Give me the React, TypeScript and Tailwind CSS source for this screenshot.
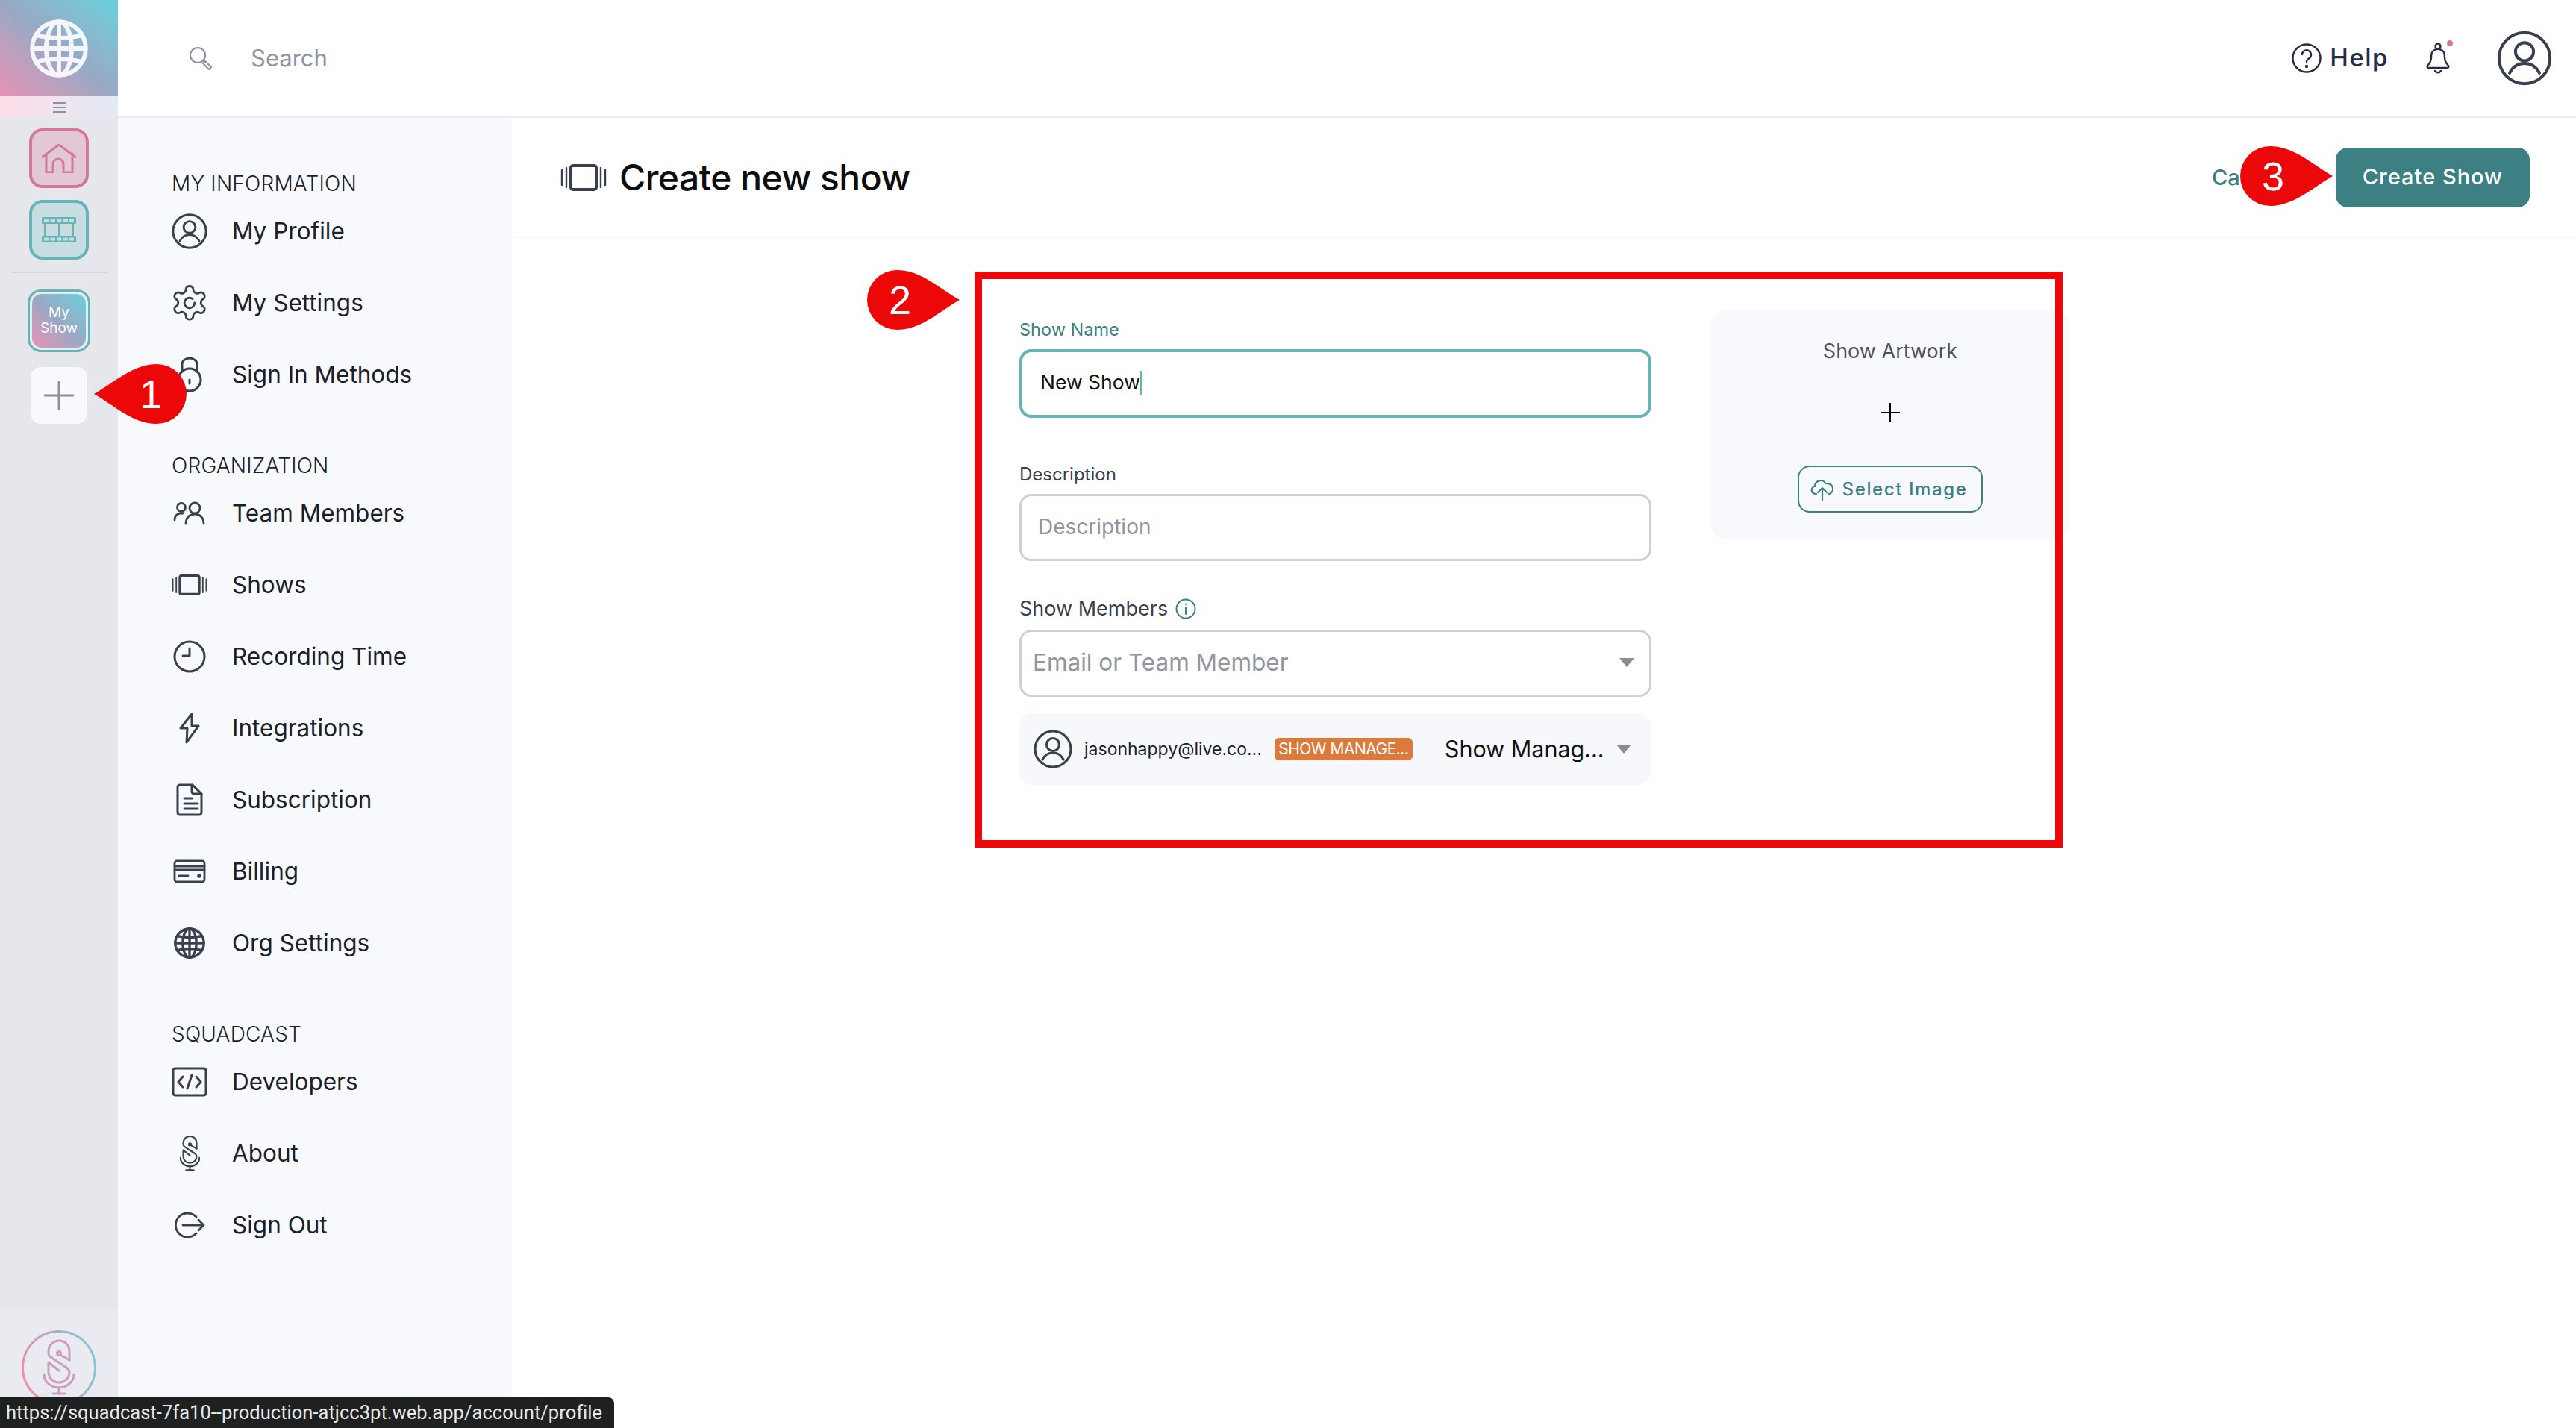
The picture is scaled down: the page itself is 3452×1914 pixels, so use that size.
import type { ReactNode } from "react";

const ink = "#3a3f4e";

const Ico = ({ children, w = 48, h = 48, vb = "0 0 48 48", color = ink, sw = 3 }: { children: ReactNode; w?: number; h?: number; vb?: string; color?: string; sw?: number }) => (
  <svg className="shrink-0" width={w} height={h} viewBox={vb} fill="none" stroke={color} strokeWidth={sw} strokeLinecap="round" strokeLinejoin="round">
    {children}
  </svg>
);

const UserIcon = ({ size = 52, sw = 3.2 }: { size?: number; sw?: number }) => (
  <Ico w={size} h={size} vb="0 0 52 52" sw={sw}>
    <circle cx="26" cy="26" r="24" />
    <circle cx="26" cy="20" r="8.5" />
    <path d="M12 40c3-6 8-9 14-9s11 3 14 9" />
  </Ico>
);

const ShowsIcon = ({ w = 48, h = 28 }: { w?: number; h?: number }) => (
  <Ico w={w} h={h} vb="0 0 62 36" sw={3}>
    <rect x="14" y="2" width="34" height="32" rx="3" strokeWidth="4" />
    <path d="M8 5v26M2 8v20M54 5v26M60 8v20" strokeWidth="2.4" />
  </Ico>
);

const GlobeLines = () => (
  <>
    <circle cx="24" cy="24" r="21" />
    <ellipse cx="24" cy="24" rx="10" ry="21" />
    <path d="M24 3v42M3 24h42M6 13.5c10 3 26 3 36 0M6 34.5c10-3 26-3 36 0" />
  </>
);

// S shaped microphone used for the SquadCast mark
const MicPaths = () => (
  <>
    <path d="M35 26V14A14 14 0 0 0 7 14V17Q7 20 10 22L31 36Q35 39 35 42A14 14 0 0 1 7 42V29L21 40" />
    <circle cx="21" cy="17" r="2.5" />
    <path d="M23 19L35 26" />
    <path d="M1 45A20 18 0 0 0 41 45" />
    <path d="M21 63v6M13 71h16" />
  </>
);

const items: Record<string, { label: string; icon: ReactNode }[]> = {
  "MY INFORMATION": [
    { label: "My Profile", icon: <UserIcon size={48} /> },
    {
      label: "My Settings",
      icon: (
        <Ico w={54} h={54} vb="0 0 24 24" sw={1.25}>
          <path d="M12.2 2h-.4a2 2 0 0 0-2 2v.2a2 2 0 0 1-1 1.7l-.4.2a2 2 0 0 1-2 0l-.2-.1a2 2 0 0 0-2.7.7l-.2.4a2 2 0 0 0 .7 2.7l.2.1a2 2 0 0 1 1 1.7v.6a2 2 0 0 1-1 1.7l-.2.1a2 2 0 0 0-.7 2.7l.2.4a2 2 0 0 0 2.7.7l.2-.1a2 2 0 0 1 2 0l.4.2a2 2 0 0 1 1 1.7v.2a2 2 0 0 0 2 2h.4a2 2 0 0 0 2-2v-.2a2 2 0 0 1 1-1.7l.4-.2a2 2 0 0 1 2 0l.2.1a2 2 0 0 0 2.7-.7l.2-.4a2 2 0 0 0-.7-2.7l-.2-.1a2 2 0 0 1-1-1.7v-.6a2 2 0 0 1 1-1.7l.2-.1a2 2 0 0 0 .7-2.7l-.2-.4a2 2 0 0 0-2.7-.7l-.2.1a2 2 0 0 1-2 0l-.4-.2a2 2 0 0 1-1-1.7V4a2 2 0 0 0-2-2z" />
          <path d="M15 12a3 3 0 1 1-1.2-2.4" />
        </Ico>
      ),
    },
    {
      label: "Sign In Methods",
      icon: (
        <Ico w={40} h={48} vb="0 0 40 48" sw={3}>
          <circle cx="20" cy="31" r="15" />
          <path d="M10 20V10a10 8 0 0 1 20 0v10" />
          <path d="M20 31v5" />
        </Ico>
      ),
    },
  ],
  ORGANIZATION: [
    {
      label: "Team Members",
      icon: (
        <Ico w={44} h={32} vb="0 0 44 32" sw={2.8}>
          <circle cx="11" cy="8" r="5.5" />
          <circle cx="29" cy="9" r="7" />
          <path d="M2 25c0-6 4-9 8-9h3M17 30c0-8 5-13 12-13s12 5 12 13" />
        </Ico>
      ),
    },
    { label: "Shows", icon: <ShowsIcon /> },
    {
      label: "Recording Time",
      icon: (
        <Ico w={44} h={44} vb="0 0 44 44" sw={3}>
          <circle cx="22" cy="22" r="20" />
          <path d="M22 11v10h-9" />
        </Ico>
      ),
    },
    {
      label: "Integrations",
      icon: (
        <Ico w={30} h={42} vb="0 0 30 42" sw={3}>
          <path d="M18 2L3 21h9l-1 19 16-22h-9l0-16z" />
        </Ico>
      ),
    },
    {
      label: "Subscription",
      icon: (
        <Ico w={36} h={44} vb="0 0 36 44" sw={3}>
          <path d="M5 2h17l12 12v25a3 3 0 0 1-3 3H5a3 3 0 0 1-3-3V5a3 3 0 0 1 3-3z" />
          <path d="M21 2v9a3 3 0 0 0 3 3h10M11 20h10M11 27h18M11 34h18" />
        </Ico>
      ),
    },
    {
      label: "Billing",
      icon: (
        <Ico w={44} h={32} vb="0 0 44 32" sw={2.8}>
          <rect x="2" y="2" width="40" height="28" rx="3" />
          <path d="M2 9h40M2 14h40M8 22h12" />
          <circle cx="35" cy="22" r="1.4" fill={ink} />
        </Ico>
      ),
    },
    {
      label: "Org Settings",
      icon: (
        <Ico w={44} h={44} vb="0 0 48 48" sw={3.6}>
          <GlobeLines />
        </Ico>
      ),
    },
  ],
  SQUADCAST: [
    {
      label: "Developers",
      icon: (
        <Ico w={48} h={40} vb="0 0 48 40" sw={3}>
          <rect x="2" y="2" width="44" height="36" rx="3" />
          <path d="M15 13l-6 7 6 7M33 13l6 7-6 7M27 11l-6 18" />
        </Ico>
      ),
    },
    {
      label: "About",
      icon: (
        <Ico w={27} h={46} vb="0 0 42 72" sw={3.4}>
          <MicPaths />
        </Ico>
      ),
    },
    {
      label: "Sign Out",
      icon: (
        <Ico w={44} h={36} vb="0 0 44 36" sw={2.8}>
          <path d="M31 7A16 16 0 1 0 31 29" />
          <path d="M13 18h28M34 11l7 7-7 7" />
        </Ico>
      ),
    },
  ],
};

const Teardrop = ({ n, flip, className }: { n: string; flip?: boolean; className: string }) => (
  <div className={`absolute h-[80px] w-[124px] ${className}`}>
    <svg width="124" height="80" viewBox="0 0 124 80" className={flip ? "-scale-x-100" : ""}>
      <path d="M0 40C28 24 52 0 84 0a40 40 0 0 1 0 80C52 80 28 56 0 40z" fill="#ec0808" />
    </svg>
    <span className={`absolute top-0 flex h-[80px] w-[60px] items-center justify-center font-['Liberation_Sans',sans-serif] text-[54px] text-white ${flip ? "left-[14px]" : "right-[18px]"}`}>
      {n}
    </span>
  </div>
);

const Caret = () => <div className="h-0 w-0 border-x-[10px] border-t-[12px] border-x-transparent border-t-[#8d8d8d]" />;

export default function App() {
  return (
    <div className="relative flex h-[1914px] w-[3452px] overflow-hidden bg-white font-['Inter',sans-serif] text-[#1c1f2a]">
      {/* icon rail */}
      <div className="flex w-[158px] shrink-0 flex-col items-center bg-[#e6e7ec]">
        <div className="flex h-[129px] w-full items-center justify-center bg-gradient-to-tr from-[#e78fb5] via-[#97a9c4] to-[#64d0de]">
          <svg width="82" height="82" viewBox="0 0 48 48" fill="none" stroke="#f4f6fb" strokeWidth="3.4">
            <GlobeLines />
          </svg>
        </div>
        <div className="flex h-[29px] w-full flex-col items-center justify-center gap-[4px] bg-gradient-to-r from-[#fbdfe9] to-[#e4e9f3]">
          <div className="h-[2px] w-[17px] bg-[#8d93a0]" />
          <div className="h-[2px] w-[17px] bg-[#8d93a0]" />
          <div className="h-[2px] w-[17px] bg-[#8d93a0]" />
        </div>
        <div className="mt-[14px] flex h-[80px] w-[80px] items-center justify-center rounded-[18px] border-4 border-[#d4779a] bg-[#e2c8d6]">
          <svg width="46" height="39" viewBox="0 0 46 39" fill="none" stroke="#d4779a" strokeWidth="3" strokeLinecap="round" strokeLinejoin="round">
            <path d="M1 17.500L23 1l22 16.500M6 13v25h9V27a7 7 0 0 1 14 0v11h12V13" />
          </svg>
        </div>
        <div className="mt-[16px] flex h-[80px] w-[80px] items-center justify-center rounded-[18px] border-4 border-[#65b4b6] bg-[#c8dde1]">
          <svg width="46" height="34" viewBox="0 0 46 34" fill="none">
            <rect x="0" y="0" width="46" height="9" rx="1.500" fill="#65b4b6" />
            <rect x="0" y="25" width="46" height="9" rx="1.500" fill="#65b4b6" />
            <path d="M4 9v16M23 9v16M42 9v16" stroke="#65b4b6" strokeWidth="2" />
            <path d="M3 4.500h40M3 29.500h40" stroke="#c8dde1" strokeWidth="4" strokeDasharray="6.400 2.100" />
          </svg>
        </div>
        <div className="mt-[16px] h-[2px] w-[128px] bg-[#d6d8df]" />
        <div className="mt-[22px] flex h-[84px] w-[84px] items-center justify-center rounded-[18px] border-[3px] border-[#65b4b6] bg-[#e8ebf0]">
          <div className="flex h-[72px] w-[72px] items-center justify-center rounded-[13px] bg-gradient-to-tr from-[#e78fb5] via-[#97a9c4] to-[#64d0de] pb-[2px] text-center text-[19px] leading-[21px] text-white">
            My
            <br />
            Show
          </div>
        </div>
        <div className="mt-[20px] flex h-[76px] w-[76px] items-center justify-center rounded-[14px] bg-[#f8f9fd]">
          <svg width="40" height="40" viewBox="0 0 40 40" stroke="#8d909a" strokeWidth="3" strokeLinecap="round">
            <path d="M20 1v38M1 20h38" />
          </svg>
        </div>
        <div className="mt-auto flex h-[160px] w-full justify-center bg-[#eaebf0] pt-[29px]">
          <svg width="100" height="100" viewBox="0 0 100 100" fill="none" className="shrink-0">
            <defs>
              <linearGradient id="ring" x1="0" y1="0.650" x2="1" y2="0.350">
                <stop offset="0" stopColor="#f48aae" />
                <stop offset="0.500" stopColor="#b3a6c6" />
                <stop offset="1" stopColor="#84c8d8" />
              </linearGradient>
            </defs>
            <circle cx="50" cy="50" r="48.500" stroke="url(#ring)" strokeWidth="3" />
            <g transform="translate(29 14)" stroke="#cc9dbe" strokeWidth="3" strokeLinecap="round" strokeLinejoin="round">
              <MicPaths />
            </g>
          </svg>
        </div>
      </div>

      <div className="flex min-w-0 flex-1 flex-col">
        {/* top bar */}
        <header className="flex h-[158px] shrink-0 items-center border-b-2 border-[#ececf0] pr-[32px] pl-[95px]">
          <svg width="32" height="32" viewBox="0 0 32 32" fill="none" stroke="#8d93a0" strokeWidth="2.200">
            <circle cx="12" cy="12" r="10" />
            <path d="M19 19l3 3M22 20l8 8-3 3-8-8z" />
          </svg>
          <span className="ml-[51px] text-[31px] text-[#8d93a0]">Search</span>
          <div className="ml-auto flex items-center">
            <svg width="40" height="40" viewBox="0 0 40 40" fill="none" stroke="#262c44" strokeWidth="2.400" strokeLinecap="round">
              <circle cx="20" cy="20" r="18.500" />
              <path d="M14 15a6 6 0 1 1 9 5.500c-2 1.200-3 2.300-3 4.500" />
              <circle cx="20" cy="31" r="1" fill="#262c44" />
            </svg>
            <span className="ml-[11px] text-[33px] font-medium tracking-[1.5px] text-[#262c44]">Help</span>
            <div className="relative ml-[50px] h-[42px] w-[32px]">
              <svg width="32" height="42" viewBox="0 0 32 42" fill="none" stroke="#262c44" strokeWidth="2.400" strokeLinecap="round" strokeLinejoin="round">
                <circle cx="16" cy="5" r="3.500" />
                <path d="M10 11c-3 2-3 6-3 9 0 5-2 8-5 11-1 1 0 3 1 3h26c1 0 2-2 1-3-3-3-5-6-5-11 0-3 0-7-3-9a9 9 0 0 0-12 0z" />
                <path d="M12 38c2 3 6 3 8 0" />
              </svg>
              <div className="absolute top-[-3px] right-[-4px] h-[8px] w-[8px] rounded-full bg-[#d4779a]" />
            </div>
            <div className="ml-[63px]">
              <UserIcon size={74} sw={2.800} />
            </div>
          </div>
        </header>

        <div className="flex min-h-0 flex-1">
          {/* settings nav */}
          <nav className="flex w-[528px] shrink-0 flex-col bg-[#f8f9fd] pt-[72px] pl-[72px]">
            {Object.entries(items).map(([title, rows], i) => (
              <div key={title} className={i > 0 ? "mt-[58px]" : ""}>
                <div className="flex h-[32px] items-center text-[28px] font-light tracking-[0.2px]">{title}</div>
                {rows.map((row) => (
                  <div key={row.label} className="flex h-[96px] items-center">
                    <div className="flex w-[48px] justify-center">{row.icon}</div>
                    <span className="ml-[33px] text-[31.500px]">{row.label}</span>
                  </div>
                ))}
              </div>
            ))}
          </nav>

          <main className="min-w-0 flex-1">
            <div className="flex h-[161px] items-center border-b-2 border-[#f6f7fb] pr-[62px] pl-[65px]">
              <ShowsIcon w={62} h={36} />
              <h1 className="ml-[17px] text-[48px] font-medium tracking-[-0.5px] text-[#0d0d10]">Create new show</h1>
              <span className="ml-auto w-[166px] text-[29px] font-medium text-[#3c8083]">Cancel</span>
              <button className="h-[80px] w-[260px] rounded-[16px] bg-[#3c8083] pb-[2px] text-[29px] font-medium tracking-[1px] text-white">Create Show</button>
            </div>

            <div className="ml-[680px] flex items-start pt-[105px]">
              {/* form */}
              <div className="flex w-[847px] shrink-0 flex-col">
                <label className="mt-[2px] flex h-[32px] items-center text-[23.500px] text-[#3c8083]">Show Name</label>
                <div className="mt-[10px] flex h-[92px] items-center rounded-[16px] border-4 border-[#65b4b6] pb-[2px] pl-[24px] text-[26.500px] text-[#111]">
                  New Show
                  <div className="h-[32px] w-[2px] bg-[#65b4b6]" />
                </div>
                <label className="mt-[60px] flex h-[32px] items-center text-[24px] text-[#3a3f4e]">Description</label>
                <div className="mt-[10px] flex h-[90px] items-center rounded-[16px] border-[3px] border-[#ccd0da] pb-[2px] pl-[22px] text-[28px] text-[#92959d]">Description</div>
                <label className="mt-[48px] flex h-[32px] items-center gap-[10px] text-[27px] text-[#3a3f4e]">
                  Show Members
                  <svg width="28" height="28" viewBox="0 0 28 28" fill="none" stroke="#3c8083" strokeWidth="2" strokeLinecap="round">
                    <circle cx="14" cy="14" r="12.500" />
                    <path d="M14 12.500V21M14 7.500v.5" />
                  </svg>
                </label>
                <div className="mt-[12px] flex h-[90px] items-center justify-between rounded-[16px] border-[3px] border-[#ccd0da] pr-[20px] pb-[2px] pl-[15px] text-[31.500px] text-[#92959d]">
                  Email or Team Member
                  <Caret />
                </div>
                <div className="mt-[21px] flex h-[98px] items-center rounded-[20px] bg-[#f7f8fc] pr-[27px] pl-[19px]">
                  <UserIcon size={52} />
                  <span className="ml-[16px] whitespace-nowrap text-[23px]">jasonhappy@live.co...</span>
                  <span className="ml-[17px] flex h-[30px] w-[185px] shrink-0 items-center justify-center rounded-[6px] bg-[#dc7a3c] text-[21px] tracking-[-0.5px] whitespace-nowrap text-white">SHOW MANAGE...</span>
                  <span className="ml-[43px] whitespace-nowrap text-[30.500px] text-[#111]">Show Manag...</span>
                  <div className="ml-auto">
                    <Caret />
                  </div>
                </div>
              </div>

              {/* artwork */}
              <div className="mt-[-8px] ml-[80px] flex h-[307px] w-[480px] shrink-0 flex-col items-center rounded-[20px] bg-[#f8f9fd] pt-[37px]">
                <span className="text-[27px] leading-[36px] text-[#50535e]">Show Artwork</span>
                <svg className="mt-[51px]" width="26" height="26" viewBox="0 0 26 26" stroke="#000" strokeWidth="2">
                  <path d="M13 0v26M0 13h26" />
                </svg>
                <button className="mt-[58px] flex h-[63px] w-[248px] items-center justify-center gap-[11px] rounded-[16px] border-[2.500px] border-[#3c8083] pr-[4px] text-[24px] font-medium tracking-[1.6px] text-[#3c8083]">
                  <svg width="32" height="30" viewBox="0 0 32 30" fill="none" stroke="#3c8083" strokeWidth="2.200" strokeLinecap="round" strokeLinejoin="round">
                    <path d="M8 21c-8 0-8-9-2-10 0-8 11-11 14-4 6-1 11 3 10 9-1 3-3 5-6 5" />
                    <path d="M16 29V14M10 19l6-6 6 6" />
                  </svg>
                  Select Image
                </button>
              </div>
            </div>
          </main>
        </div>
      </div>

      {/* tutorial annotations on top of the screenshot */}
      <div className="absolute top-[364px] left-[1306px] h-[772px] w-[1458px] border-[10px] border-[#ec0808]" />
      <Teardrop n="1" className="top-[488px] left-[126px]" />
      <Teardrop n="2" flip className="top-[362px] left-[1162px]" />
      <Teardrop n="3" flip className="top-[196px] left-[3002px]" />

      {/* link preview bubble */}
      <div className="absolute bottom-0 left-0 flex h-[41px] w-[823px] items-center rounded-tr-[8px] bg-[#1f2120] pl-[8px] font-['Roboto',sans-serif] text-[25.500px] tracking-[0.03px] whitespace-nowrap text-[#e8e8e8] [font-variant-ligatures:none]">
        https://squadcast-7fa10--production-atjcc3pt.web.app/account/profile
      </div>
    </div>
  );
}
